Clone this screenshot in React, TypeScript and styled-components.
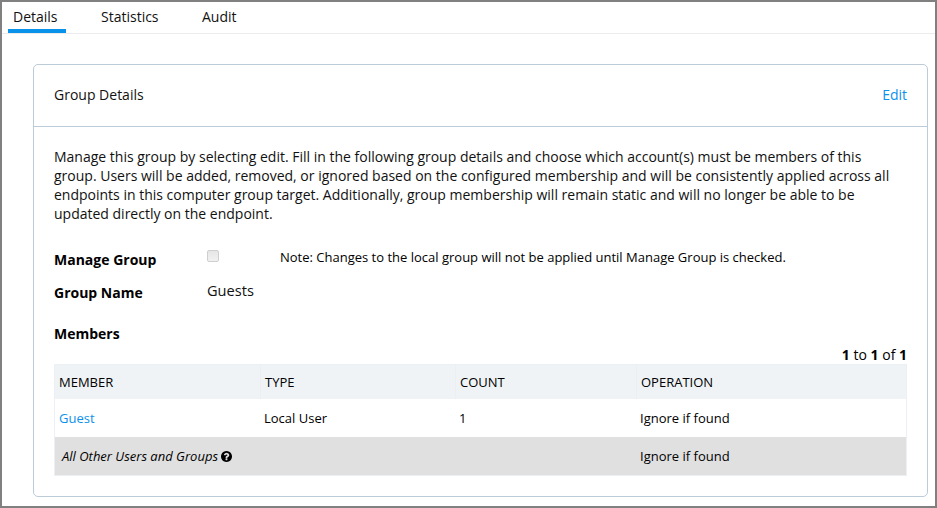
import React from "react";
import styled, { createGlobalStyle } from "styled-components";

const GlobalStyle = createGlobalStyle`
  *, *::before, *::after { box-sizing: border-box; }
  body {
    margin: 0;
    background: #fff;
    color: #000;
    font-family: "Open Sans", "Noto Sans", sans-serif;
    font-size: 14px;
    line-height: 19px;
  }
`;

const Page = styled.main`
  width: 937px;
  height: 508px;
  border: 2px solid #808080;
  background: #fff;
  overflow: hidden;
`;

const TabBar = styled.nav`
  display: flex;
  gap: 30px;
  height: 32px;
  padding-left: 6px;
  border-bottom: 1px solid #ececec;
`;

const Tab = styled.button<{ $active?: boolean; $width: number }>`
  width: ${(p) => p.$width}px;
  height: 31px;
  padding: 2px 5px 0;
  border: 0;
  border-bottom: 4px solid ${(p) => (p.$active ? "#0992ea" : "transparent")};
  background: none;
  color: #111;
  font: inherit;
  text-align: left;
  white-space: nowrap;
`;

const Panel = styled.section`
  width: 895px;
  height: 433px;
  margin: 30px 0 0 31px;
  border: 1px solid #bccbd8;
  border-radius: 5px;
`;

const PanelHeader = styled.header`
  display: flex;
  justify-content: space-between;
  align-items: center;
  height: 62px;
  padding: 0 20px 2px;
  border-bottom: 1px solid #bccbd8;
`;

const Title = styled.h2`
  margin: 0;
  font-size: 14px;
  font-weight: 400;
  color: #111;
`;

const Link = styled.a`
  color: #0b90ec;
  text-decoration: none;
`;

const PanelBody = styled.div`
  padding: 20px 20px 0;
`;

const Description = styled.p`
  margin: 0;
  white-space: pre-line;
  color: #111;
`;

const Field = styled.div<{ $top: number }>`
  display: flex;
  align-items: flex-start;
  height: 19px;
  margin-top: ${(p) => p.$top}px;
`;

const Label = styled.div`
  width: 153px;
  font-weight: 700;
  white-space: nowrap;
`;

const CheckBox = styled.span`
  width: 12px;
  height: 12px;
  border: 1px solid #cfcfcf;
  border-radius: 2px;
  background: linear-gradient(#e6e6e6, #f1f1f1);
`;

const Note = styled.span`
  margin: -2px 0 0 61px;
  font-size: 13px;
  white-space: nowrap;
`;

const Value = styled.span`
  margin-top: -2px;
  font-size: 14.6px;
  color: #111;
`;

const Counter = styled.div`
  height: 19px;
  margin-top: 2px;
  text-align: right;
`;

const Table = styled.div`
  width: 853px;
  border: 1px solid #ebf0f4;
`;

const Row = styled.div<{ $kind?: "head" | "other" }>`
  display: grid;
  grid-template-columns: 205px 195px 181px 1fr;
  align-items: stretch;
  height: ${(p) => (p.$kind === "head" ? 34 : 38)}px;
  background: ${(p) =>
    p.$kind === "head" ? "#eff3f6" : p.$kind === "other" ? "#e0e0e0" : "#fff"};
  font-size: 13px;
`;

const HeadCell = styled.div`
  display: flex;
  align-items: center;
  padding-left: 4px;
  & + & {
    border-left: 1px solid #ebeff2;
  }
`;

const Cell = styled.div<{ $italic?: boolean }>`
  display: flex;
  align-items: center;
  gap: 3px;
  padding-left: ${(p) => (p.$italic ? 7 : 4)}px;
  font-style: ${(p) => (p.$italic ? "italic" : "normal")};
  white-space: nowrap;
`;

const HelpGlyph = styled.svg`
  width: 11px;
  height: 11px;
  fill: #000;
`;

const HelpIcon = () => (
  <HelpGlyph viewBox="0 0 1536 1536" aria-label="Help">
    <path d="M896 1248v-192q0-14-9-23t-23-9H672q-14 0-23 9t-9 23v192q0 14 9 23t23 9h192q14 0 23-9t9-23zm256-672q0-88-55.500-163T958 297t-170-41q-243 0-371 213-15 24 8 42l132 100q7 6 19 6 16 0 25-12 53-68 86-92 34-24 86-24 48 0 85.500 26t37.500 59q0 38-20 61t-68 45q-63 28-115.500 86.500T640 892v36q0 14 9 23t23 9h192q14 0 23-9t9-23q0-19 21.500-49.500T972 829q32-18 49-28.500t46-35 44.500-48 28-60.500 12.500-81zm384 192q0 209-103 385.500T1153.500 1433 768 1536t-385.500-103T103 1153.500 0 768t103-385.500T382.500 103 768 0t385.500 103T1433 382.500 1536 768z" />
  </HelpGlyph>
);

const description = `Manage this group by selecting edit. Fill in the following group details and choose which account(s) must be members of this
group. Users will be added, removed, or ignored based on the configured membership and will be consistently applied across all
endpoints in this computer group target. Additionally, group membership will remain static and will no longer be able to be
updated directly on the endpoint.`;

export default function App() {
  return (
    <>
      <GlobalStyle />
      <Page>
        <TabBar>
          <Tab $active $width={58}>Details</Tab>
          <Tab $width={71}>Statistics</Tab>
          <Tab $width={50}>Audit</Tab>
        </TabBar>
        <Panel>
          <PanelHeader>
            <Title>Group Details</Title>
            <Link>Edit</Link>
          </PanelHeader>
          <PanelBody>
            <Description>{description}</Description>
            <Field $top={27}>
              <Label>Manage Group</Label>
              <CheckBox role="checkbox" aria-checked="false" />
              <Note>Note: Changes to the local group will not be applied until Manage Group is checked.</Note>
            </Field>
            <Field $top={14}>
              <Label>Group Name</Label>
              <Value>Guests</Value>
            </Field>
            <Field $top={22}>
              <Label>Members</Label>
            </Field>
            <Counter>
              <b>1</b> to <b>1</b> of <b>1</b>
            </Counter>
            <Table>
              <Row $kind="head">
                <HeadCell>MEMBER</HeadCell>
                <HeadCell>TYPE</HeadCell>
                <HeadCell>COUNT</HeadCell>
                <HeadCell>OPERATION</HeadCell>
              </Row>
              <Row>
                <Cell><Link>Guest</Link></Cell>
                <Cell>Local User</Cell>
                <Cell>1</Cell>
                <Cell>Ignore if found</Cell>
              </Row>
              <Row $kind="other">
                <Cell $italic>All Other Users and Groups <HelpIcon /></Cell>
                <Cell />
                <Cell />
                <Cell>Ignore if found</Cell>
              </Row>
            </Table>
          </PanelBody>
        </Panel>
      </Page>
    </>
  );
}
